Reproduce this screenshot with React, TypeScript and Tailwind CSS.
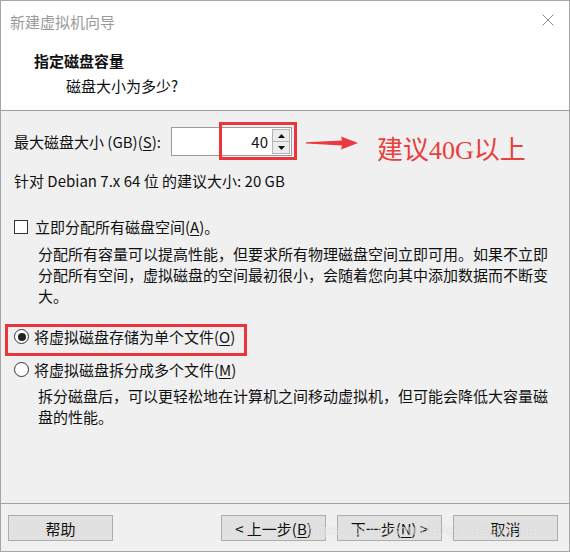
import React from 'react';

function U({ children }: { children: React.ReactNode }) {
  return <span className="underline underline-offset-2">{children}</span>;
}

function Radio({ checked }: { checked?: boolean }) {
  return (
    <span className="w-[15px] h-[15px] rounded-full border border-[#333] bg-white flex items-center justify-center shrink-0">
      {checked && <span className="w-[8px] h-[8px] rounded-full bg-[#222]" />}
    </span>
  );
}

function Btn({ children }: { children: React.ReactNode }) {
  return (
    <button
      type="button"
      className="w-[105px] h-[26px] bg-[#e1e1e1] border border-[#adadad] flex items-center justify-center text-[15px] leading-none text-[#111]"
    >
      {children}
    </button>
  );
}

export default function App() {
  return (
    <div className="w-[570px] h-[552px] flex flex-col bg-[#f0f0f0] border border-[#a6a6a6] text-[15px] text-[#111] font-['Noto_Sans_CJK_SC',sans-serif] relative overflow-hidden">
      {/* header */}
      <div className="bg-white h-[110px] border-b border-[#a0a0a0] shrink-0">
        <div className="h-[40px] flex items-center justify-between pl-[9px] pr-[15px]">
          <span className="text-[#9a9a9a] leading-none">新建虚拟机向导</span>
          <svg width="12" height="12" viewBox="0 0 12 12" className="-mt-[2px]">
            <path d="M0.5 0.5 L11.5 11.5 M11.5 0.5 L0.5 11.5" stroke="#8a8a8a" strokeWidth="1" fill="none" />
          </svg>
        </div>
        <div className="pl-[33px] mt-[9px] font-bold leading-[21px]">指定磁盘容量</div>
        <div className="pl-[65px] mt-[4px] leading-[21px]">磁盘大小为多少?</div>
      </div>

      {/* body */}
      <div className="flex-1 px-[13px]">
        <div className="mt-[16px] flex items-center h-[29px]">
          <span className="w-[157px] leading-[21px] whitespace-nowrap">
            最大磁盘大小 (GB)(<U>S</U>):
          </span>
          <div className="relative w-[121px] h-[29px] bg-white border border-[#9a9a9a] flex items-center justify-end">
            <span className="leading-none">40</span>
            <div className="ml-[4px] mr-[1px] w-[18px] h-[25px] flex flex-col">
              <div className="flex-1 bg-[#ececec] border border-[#b5b5b5] flex items-center justify-center">
                <svg width="7" height="4" viewBox="0 0 7 4"><path d="M0 4 L3.5 0 L7 4 Z" fill="#111" /></svg>
              </div>
              <div className="flex-1 bg-[#ececec] border border-t-0 border-[#b5b5b5] flex items-center justify-center">
                <svg width="7" height="4" viewBox="0 0 7 4"><path d="M0 0 L3.5 4 L7 0 Z" fill="#111" /></svg>
              </div>
            </div>
            <div className="absolute left-[47px] top-[-6px] w-[78px] h-[38px] border-[3px] border-[#e8363c]" />
          </div>
          <svg width="52" height="14" viewBox="0 0 52 14" className="ml-[14px] mt-[2px]">
            <path d="M0 6.2 L36 4.4 L35 0.5 L52 7 L35 13.5 L36 9.6 L0 7.6 Z" fill="#ea3a3f" />
          </svg>
          <span className="ml-[19px] mt-[18px] text-[26px] leading-none text-[#e8403f] font-['Liberation_Serif','Noto_Sans_CJK_SC',serif] whitespace-nowrap">
            建议40G以上
          </span>
        </div>

        <div className="mt-[14px] leading-[21px]">针对 Debian 7.x 64 位 的建议大小: 20 GB</div>

        <div className="mt-[25px] flex items-center h-[21px]">
          <span className="w-[14px] h-[14px] border border-[#333] bg-white shrink-0" />
          <span className="ml-[7px] leading-[21px]">
            立即分配所有磁盘空间(<U>A</U>)。
          </span>
        </div>
        <div className="mt-[6px] pl-[24px] w-[540px] leading-[21px]">
          分配所有容量可以提高性能，但要求所有物理磁盘空间立即可用。如果不立即分配所有空间，虚拟磁盘的空间最初很小，会随着您向其中添加数据而不断变大。
        </div>

        <div className="mt-[20px] relative flex items-center h-[21px]">
          <div className="absolute left-[-9px] top-[-2px] w-[242px] h-[32px] border-[3px] border-[#e8363c]" />
          <Radio checked />
          <span className="ml-[5px] leading-[21px]">
            将虚拟磁盘存储为单个文件(<U>O</U>)
          </span>
        </div>
        <div className="mt-[12px] flex items-center h-[21px]">
          <Radio />
          <span className="ml-[5px] leading-[21px]">
            将虚拟磁盘拆分成多个文件(<U>M</U>)
          </span>
        </div>
        <div className="mt-[5px] pl-[24px] w-[540px] leading-[21px]">
          拆分磁盘后，可以更轻松地在计算机之间移动虚拟机，但可能会降低大容量磁盘的性能。
        </div>
      </div>

      {/* footer */}
      <div className="h-[48px] shrink-0 border-t border-[#a0a0a0] pt-[11px] pl-[7px] pr-[11px] flex items-start">
        <Btn>帮助</Btn>
        <div className="ml-auto flex gap-[11px]">
          <Btn>&lt; 上一步(<U>B</U>)</Btn>
          <Btn>下一步(<U>N</U>) &gt;</Btn>
          <Btn>取消</Btn>
        </div>
      </div>

      <span className="absolute left-[306px] top-[521px] text-[15px] leading-none text-white/60 font-['Liberation_Sans',sans-serif] [text-shadow:0_0_1px_rgba(0,0,0,0.15)] pointer-events-none whitespace-nowrap">
        https://blog.csdn.net/qq_42534089
      </span>
    </div>
  );
}
